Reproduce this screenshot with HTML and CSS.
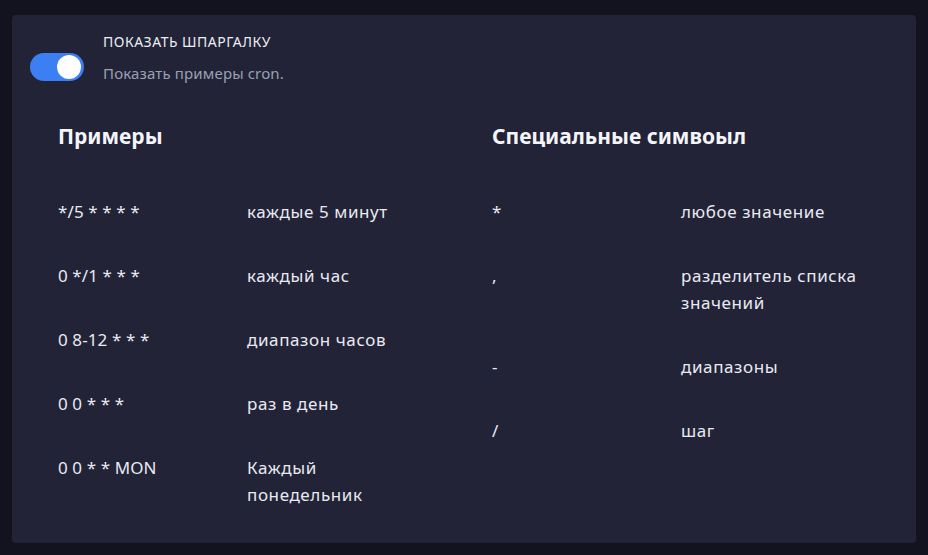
FILE: index.html
```html
<!DOCTYPE html>
<html lang="ru">
<head>
<meta charset="utf-8">
<link rel="stylesheet" href="styles.css">
</head>
<body>
<div class="card">
  <div class="toggle-row">
    <div class="switch"><span class="knob"></span></div>
    <div class="toggle-text">
      <div class="toggle-title">ПОКАЗАТЬ ШПАРГАЛКУ</div>
      <div class="toggle-sub">Показать примеры cron.</div>
    </div>
  </div>
  <div class="sections">
    <div class="section">
      <h2 class="heading">Примеры</h2>
      <div class="table">
        <div class="cell code">*/5 * * * *</div><div class="cell">каждые 5 минут</div>
        <div class="cell code">0 */1 * * *</div><div class="cell">каждый час</div>
        <div class="cell code">0 8-12 * * *</div><div class="cell">диапазон часов</div>
        <div class="cell code">0 0 * * *</div><div class="cell">раз в день</div>
        <div class="cell code">0 0 * * MON</div><div class="cell">Каждый понедельник</div>
      </div>
    </div>
    <div class="section">
      <h2 class="heading">Специальные симвоыл</h2>
      <div class="table">
        <div class="cell code">*</div><div class="cell">любое значение</div>
        <div class="cell code">,</div><div class="cell">разделитель списка значений</div>
        <div class="cell code">-</div><div class="cell">диапазоны</div>
        <div class="cell code">/</div><div class="cell">шаг</div>
      </div>
    </div>
  </div>
</div>
</body>
</html>
```
FILE: styles.css
```css
html, body {
  margin: 0;
  padding: 0;
  background: #13131f;
}
body {
  font-family: "Noto Sans", "Open Sans", sans-serif;
  color: #e8eaf2;
  width: 928px;
  height: 555px;
  overflow: hidden;
}
.card {
  margin: 15px 12px 0 12px;
  height: 528px;
  background: #222336;
  border-radius: 4px;
  box-sizing: border-box;
  padding: 18px 18px 0 18px;
}
.toggle-row {
  display: flex;
  align-items: flex-start;
  gap: 19px;
}
.switch {
  margin-top: 20px;
  width: 54px;
  height: 28px;
  border-radius: 14px;
  background: #3b7ff2;
  position: relative;
  flex: none;
}
.knob {
  position: absolute;
  right: 3px;
  top: 2px;
  width: 24px;
  height: 24px;
  border-radius: 50%;
  background: #ffffff;
}
.toggle-title {
  font-size: 14px;
  letter-spacing: 0.5px;
  line-height: 18px;
  color: #eceef5;
}
.toggle-sub {
  margin-top: 12px;
  font-size: 15px;
  letter-spacing: 0.15px;
  line-height: 20px;
  color: #9aa0b3;
}
.sections {
  display: grid;
  grid-template-columns: 434px 1fr;
  padding-left: 28px;
  margin-top: 39px;
}
.heading {
  margin: 0;
  font-size: 21px;
  line-height: 28px;
  font-weight: 700;
  color: #f4f5fa;
}
.table {
  margin-top: 30px;
  display: grid;
  grid-template-columns: 189px 180px;
}
.cell {
  font-size: 17px;
  letter-spacing: 0.6px;
  line-height: 27px;
  padding: 18px 0 19px 0;
}
.code {
  letter-spacing: 0.1px;
}
```
